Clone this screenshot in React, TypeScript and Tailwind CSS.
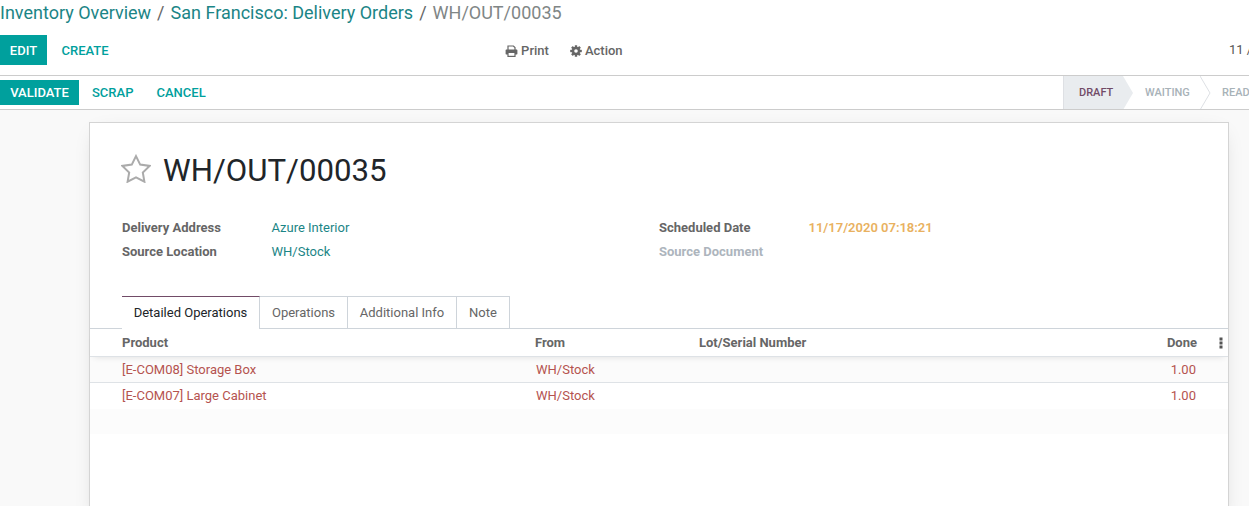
import React from "react";

const Printer = () => (
  <svg width="13" height="12" viewBox="0 0 13 12" fill="none" stroke="#666" className="mr-[3px]">
    <path d="M3 5.2V1h5.4L10 2.6v2.6" strokeWidth="1.2" />
    <path d="M2.6 9.4H1.2a.6.6 0 0 1-.6-.6V5.6c0-.6.4-1 1-1h9.8c.6 0 1 .4 1 1v3.2a.6.6 0 0 1-.6.6h-1.4" fill="#666" stroke="none" />
    <rect x="3" y="7.4" width="7" height="4" fill="#fff" strokeWidth="1.2" />
  </svg>
);

const Gear = () => (
  <svg width="12" height="12" viewBox="0 0 12 12" className="mr-[3px]">
    <g fill="#666">
      <circle cx="6" cy="6" r="4.2" />
      <rect x="4.8" y="0.2" width="2.4" height="11.6" rx="0.4" />
      <rect x="4.8" y="0.2" width="2.4" height="11.6" rx="0.4" transform="rotate(45 6 6)" />
      <rect x="4.8" y="0.2" width="2.4" height="11.6" rx="0.4" transform="rotate(90 6 6)" />
      <rect x="4.8" y="0.2" width="2.4" height="11.6" rx="0.4" transform="rotate(135 6 6)" />
    </g>
    <circle cx="6" cy="6" r="1.8" fill="#fff" />
  </svg>
);

const Star = () => (
  <svg width="30" height="29" viewBox="0 0 30 28" fill="none">
    <path d="M15 1.6 19.2 10.1 28.6 11.4 21.8 18 23.4 27.2 15 22.8 6.6 27.2 8.2 18 1.4 11.4 10.8 10.1Z" stroke="#ababab" strokeWidth="2" strokeLinejoin="miter" />
  </svg>
);

const Chevron = () => (
  <svg width="11" height="34" viewBox="0 0 11 34" className="shrink-0" fill="none">
    <path d="M0 0 10 17 0 34" stroke="#dee0e4" strokeWidth="1" />
  </svg>
);

const rows = ["[E-COM08] Storage Box", "[E-COM07] Large Cabinet"];

export default function App() {
  return (
    <div className="w-[1249px] h-[506px] overflow-hidden bg-white text-[13px] leading-[20px] text-[#666] font-['Roboto',sans-serif]">
      <div className="h-[75px] pt-[1px]">
        <div className="h-[24px] flex items-center text-[18px] leading-[24px] whitespace-nowrap">
          <span className="text-[#1b8586]">Inventory Overview</span>
          <span className="text-[#666] mx-[6px]">/</span>
          <span className="text-[#1b8586]">San Francisco: Delivery Orders</span>
          <span className="text-[#666] mx-[6px]">/</span>
          <span className="text-[#7f8686]">WH/OUT/00035</span>
        </div>
        <div className="h-[30px] mt-[10px] flex items-center relative">
          <div className="w-[47px] h-[30px] pt-[1px] bg-[#00a09d] text-white font-medium text-[13px] flex items-center justify-center">EDIT</div>
          <div className="ml-[12.5px] px-[2px] pt-[1px] text-[#00a09d] font-medium text-[13px]">CREATE</div>
          <div className="ml-[394.5px] pt-[1px] flex items-center text-[#666] font-medium text-[13px]"><Printer />Print</div>
          <div className="ml-[21px] pt-[1px] flex items-center text-[#666] font-medium text-[13px]"><Gear />Action</div>
          <div className="ml-auto w-[20px] overflow-hidden whitespace-nowrap text-[13px] text-[#555]">11 / 80</div>
        </div>
      </div>

      <div className="h-[35px] border-y border-[#ccc] flex items-center justify-between bg-white">
        <div className="flex items-center h-full">
          <div className="w-[79px] h-[25px] bg-[#00a09d] text-white font-medium text-[13px] flex items-center justify-center">VALIDATE</div>
          <div className="ml-[13px] text-[#00a09d] font-medium text-[13px]">SCRAP</div>
          <div className="ml-[23px] text-[#00a09d] font-medium text-[13px]">CANCEL</div>
        </div>
        <div className="flex h-full w-[186px] overflow-hidden text-[11px] font-medium items-stretch whitespace-nowrap">
          <div className="w-[60px] shrink-0 bg-[#e9ecef] border-l border-[#dee0e4] text-[#714b67] flex items-center pl-[15px]">DRAFT</div>
          <svg width="11" height="34" viewBox="0 0 11 34" className="shrink-0"><path d="M0 0 10 17 0 34Z" fill="#e9ecef" /></svg>
          <div className="w-[66px] shrink-0 text-[#a8b2b8] flex items-center pl-[11px]">WAITING</div>
          <Chevron />
          <div className="shrink-0 text-[#a8b2b8] flex items-center pl-[11px]">READY</div>
        </div>
      </div>

      <div className="h-[396px] bg-[#f9f9f9] pt-[12px] pl-[89px] pr-[20px]">
        <div className="h-[400px] bg-white border border-[#d4d4d4] shadow-[0_5px_20px_-10px_rgba(0,0,0,0.25)]">
          <div className="pl-[31px] pt-[26px] flex items-center h-[65px]">
            <Star />
            <div className="ml-[12px] pt-[4px] text-[31.2px] leading-[38px] text-[#212529]">WH/OUT/00035</div>
          </div>

          <div className="mt-[30px] pl-[32px] grid grid-cols-[537px_1fr] leading-[20px]">
            <div className="flex flex-col gap-[4px]">
              <div className="flex"><span className="w-[149.5px] font-bold text-[#666]">Delivery Address</span><span className="text-[#1b8586]">Azure Interior</span></div>
              <div className="flex"><span className="w-[149.5px] font-bold text-[#666]">Source Location</span><span className="text-[#1b8586]">WH/Stock</span></div>
            </div>
            <div className="flex flex-col gap-[4px]">
              <div className="flex"><span className="w-[149.5px] font-bold text-[#666]">Scheduled Date</span><span className="text-[#e9b160] font-semibold">11/17/2020 07:18:21</span></div>
              <div className="flex"><span className="w-[150px] font-bold text-[#adb5bd]">Source Document</span></div>
            </div>
          </div>

          <div className="mt-[34px] pl-[32px] h-[33px] border-b border-[#ced4da] flex items-stretch">
            <div className="w-[138px] h-[33px] bg-white border-t border-t-[#714b67] border-r border-r-[#ced4da] text-[#212529] flex items-center justify-center">Detailed Operations</div>
            <div className="w-[88px] border-t border-r border-[#ced4da] flex items-center justify-center">Operations</div>
            <div className="w-[109px] border-t border-r border-[#ced4da] flex items-center justify-center">Additional Info</div>
            <div className="w-[53px] border-t border-r border-[#ced4da] flex items-center justify-center">Note</div>
          </div>

          <div className="h-[28px] border-b border-[#dee2e6] flex items-center font-bold text-[13px] text-[#666] shadow-[0_4px_6px_-4px_rgba(0,0,0,0.12)] relative">
            <span className="ml-[32px] w-[413px]">Product</span>
            <span className="w-[164px]">From</span>
            <span className="flex-1">Lot/Serial Number</span>
            <span className="mr-[22px]">Done</span>
            <svg width="4" height="12" viewBox="0 0 4 12" className="mr-[5px]"><g fill="#555"><rect x="0.5" y="0.5" width="3" height="3" /><rect x="0.5" y="4.5" width="3" height="3" /><rect x="0.5" y="8.5" width="3" height="3" /></g></svg>
          </div>

          {rows.map((r, i) => (
            <div key={r} className={`h-[26px] flex items-center text-[#b5534f] ${i === 0 ? "border-b border-[#dee2e6] bg-[#fbfbfb]" : ""}`}>
              <span className="ml-[32px] w-[414px]">{r}</span>
              <span className="flex-1">WH/Stock</span>
              <span className="mr-[32px]">1.00</span>
            </div>
          ))}
          <div className="h-[25px] bg-[#fcfcfc]" />
        </div>
      </div>
    </div>
  );
}
